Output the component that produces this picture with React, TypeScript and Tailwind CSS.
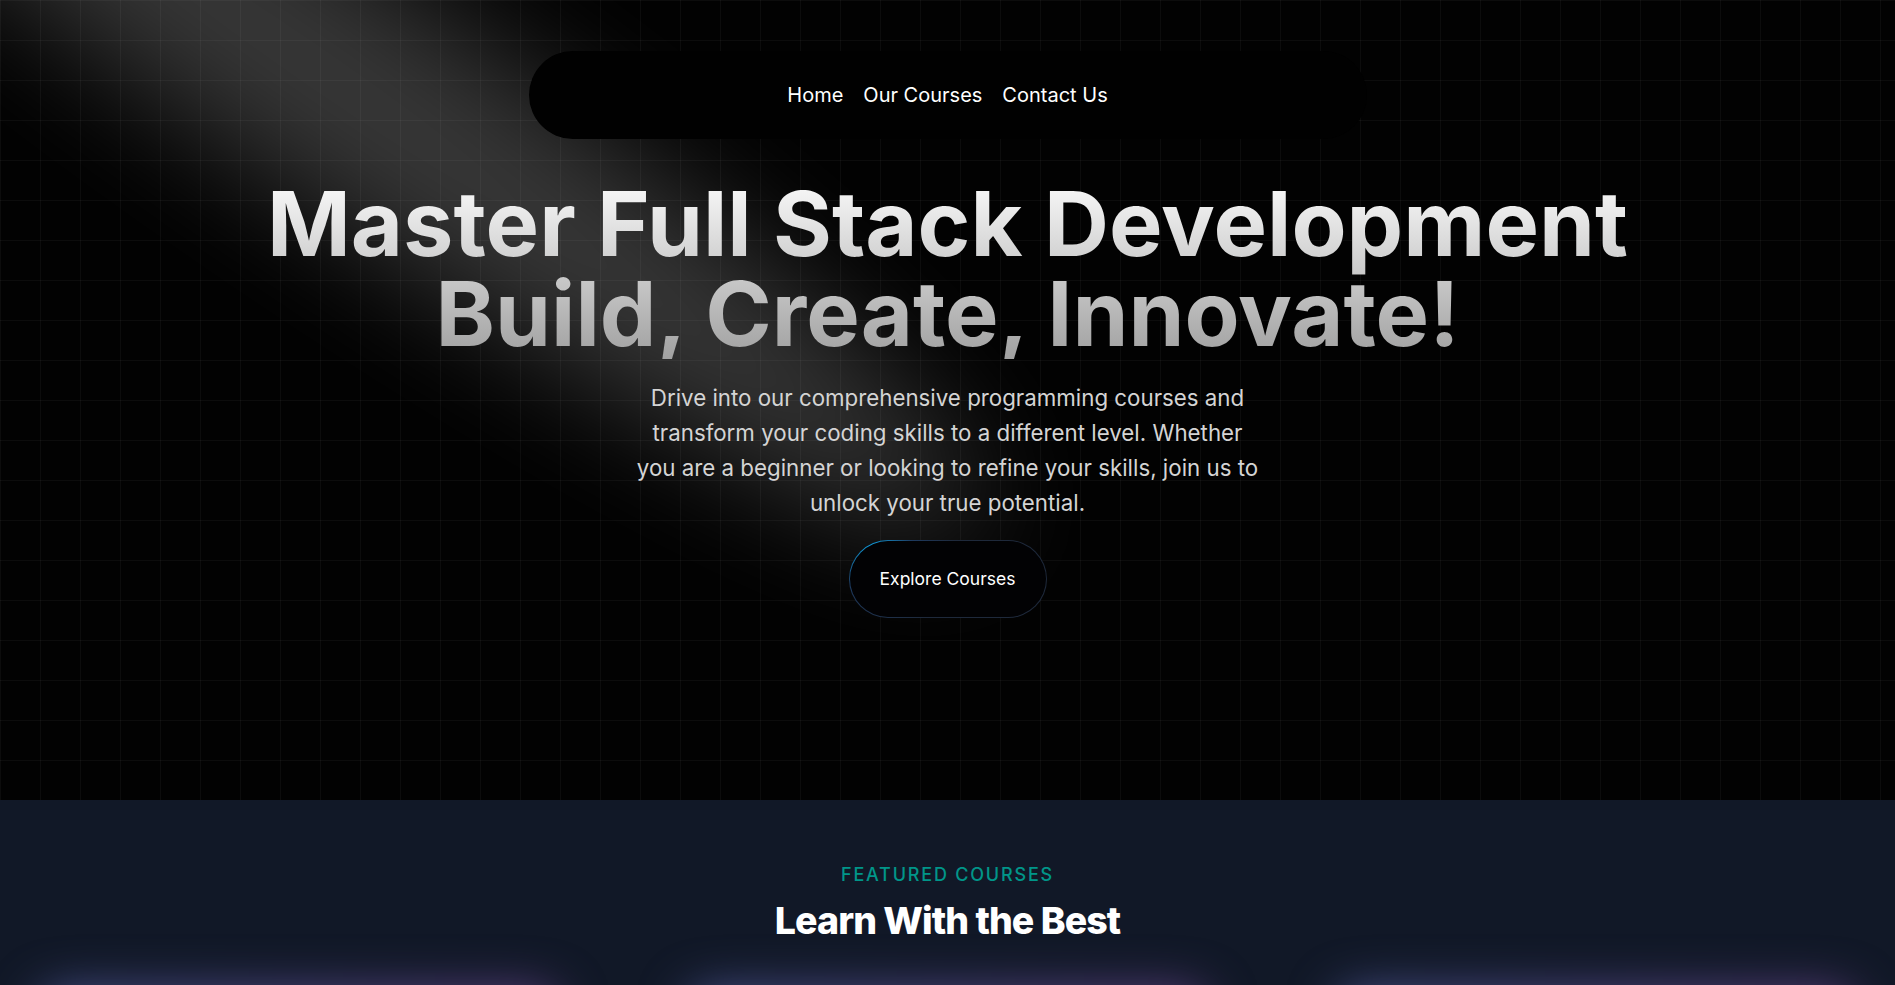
import React from "react";

function Spotlight() {
  return (
    <svg
      className="pointer-events-none absolute left-[-480px] top-[-530px] z-[1] h-[1195px] w-[1592px]"
      viewBox="0 0 3787 2842"
      fill="none"
    >
      <g filter="url(#spotlight-filter)">
        <ellipse
          cx="1924.71"
          cy="273.501"
          rx="1924.71"
          ry="273.501"
          transform="matrix(-0.822377 -0.568943 -0.568943 0.822377 3631.88 2291.09)"
          fill="white"
          fillOpacity="0.21"
        />
      </g>
      <defs>
        <filter
          id="spotlight-filter"
          x="0.860352"
          y="0.838989"
          width="3785.16"
          height="2840.26"
          filterUnits="userSpaceOnUse"
          colorInterpolationFilters="sRGB"
        >
          <feFlood floodOpacity="0" result="BackgroundImageFix" />
          <feBlend mode="normal" in="SourceGraphic" in2="BackgroundImageFix" result="shape" />
          <feGaussianBlur stdDeviation="151" result="blur" />
        </filter>
      </defs>
    </svg>
  );
}

function Card() {
  return (
    <div className="relative h-[420px]">
      <div className="absolute inset-x-0 top-0 h-[320px] rounded-3xl bg-linear-to-r from-[#4a5590] to-[#5e3f80] blur-xl" />
      <div className="relative h-full rounded-3xl" />
    </div>
  );
}

export default function App() {
  return (
    <div className="min-h-screen w-full bg-[#111827] font-['Inter',sans-serif]">
      <section className="relative h-[800px] w-full overflow-hidden bg-[#020202] bg-[linear-gradient(to_right,rgba(255,255,255,0.04)_1px,transparent_1px),linear-gradient(to_bottom,rgba(255,255,255,0.04)_1px,transparent_1px)] bg-[size:40px_40px]">
        <Spotlight />
        <div className="relative z-10 flex flex-col items-center">
          <nav className="mt-[51px] flex h-[88px] w-[838px] items-center justify-center gap-5 rounded-full bg-[#010101] text-[20px] text-white">
            <a href="#" className="cursor-pointer">Home</a>
            <a href="#" className="cursor-pointer">Our Courses</a>
            <a href="#" className="cursor-pointer">Contact Us</a>
          </nav>
          <h1 className="mt-[40px] bg-linear-to-b from-neutral-50 to-neutral-400 bg-clip-text text-center text-[90px] font-bold leading-none text-transparent">
            Master Full Stack Development
            <br />
            Build, Create, Innovate!
          </h1>
          <p className="mt-[21px] w-[630px] text-center text-[22.3px] leading-[35px] text-neutral-300">
            Drive into our comprehensive programming courses and transform your coding skills to a different level. Whether you are a beginner or looking to refine your skills, join us to unlock your true potential.
          </p>
          <div className="mt-[20px] rounded-full bg-[radial-gradient(circle_at_12%_15%,#0ea5e9_0%,#1e3a5f_22%,#1e293b_45%)] p-px">
            <button className="flex h-[76px] w-[196px] items-center justify-center rounded-full bg-[#020204] text-[17.5px] text-white">
              Explore Courses
            </button>
          </div>
        </div>
      </section>

      <section className="bg-[#111827] pt-[61px]">
        <p className="text-center text-[18px] font-medium uppercase leading-7 tracking-widest text-teal-600">
          Featured Courses
        </p>
        <h2 className="mt-[12px] text-center text-[37.5px] font-extrabold leading-10 tracking-tight text-white">
          Learn With the Best
        </h2>
        <div className="mt-[50px] grid grid-cols-3 gap-[130px] px-[40px]">
          <Card />
          <Card />
          <Card />
        </div>
      </section>
    </div>
  );
}
